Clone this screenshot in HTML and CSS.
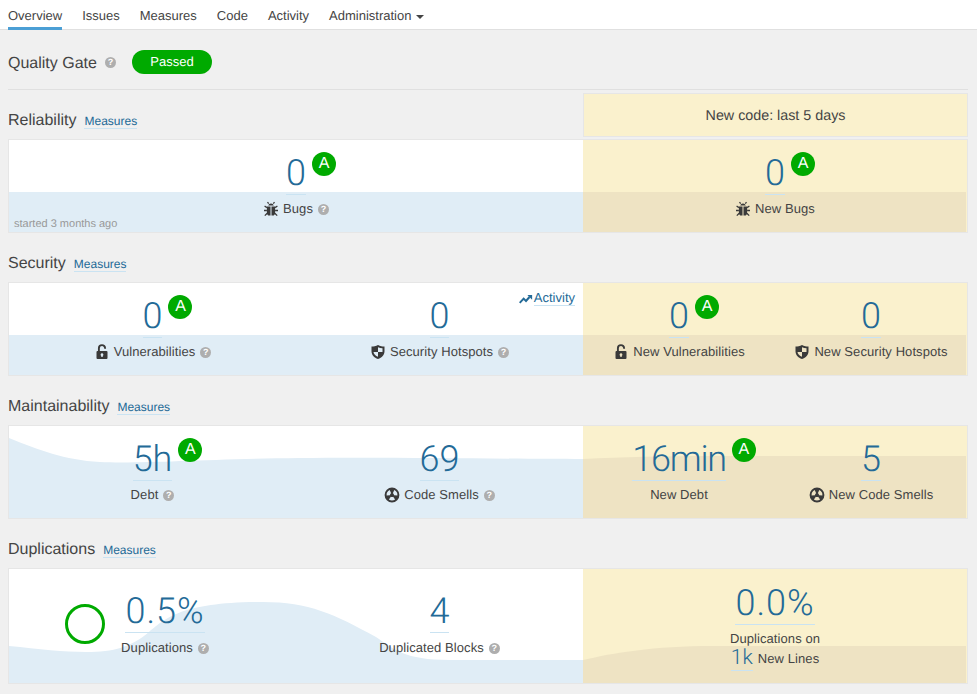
FILE: index.html
```html
<!DOCTYPE html>
<html lang="en">
<head>
<meta charset="utf-8">
<title>Overview</title>
<link rel="stylesheet" href="styles.css">
</head>
<body>
<svg class="defs" width="0" height="0" aria-hidden="true">
  <symbol id="i-bug" viewBox="0 0 16 16">
    <path d="M5.2 4.600a2.900 2.900 0 0 1 5.600 0z"/>
    <path d="M3.900 5.400h3.600v9.200H6.200c-1.400 0-2.300-1.100-2.300-2.600zM8.500 5.400h3.600V12c0 1.500-.9 2.600-2.300 2.600H8.500z"/>
    <path d="M5.700 2.600 4.500 1.200M10.300 2.600l1.200-1.400M3.900 6.600 1.600 5M12.100 6.600 14.400 5M3.900 9.500H1M12.100 9.500H15M4.200 12.200 1.800 14.600M11.800 12.200l2.400 2.400" fill="none" stroke="currentColor" stroke-width="1.300"/>
  </symbol>
  <symbol id="i-lock" viewBox="0 0 16 16">
    <path fill-rule="evenodd" d="M3.500 7h9a1 1 0 0 1 1 1v6a1 1 0 0 1-1 1h-9a1 1 0 0 1-1-1V8a1 1 0 0 1 1-1zM8 9.300a1.400 1.400 0 0 0-.7 2.600V13h1.400v-1.100A1.400 1.400 0 0 0 8 9.300z"/>
    <path d="M4.900 7.500V4.200a3.100 3.100 0 0 1 6.200 0v.6" fill="none" stroke="currentColor" stroke-width="1.900"/>
  </symbol>
  <symbol id="i-shield" viewBox="0 0 16 16">
    <path fill-rule="evenodd" d="M8 1c2.200 1.100 4.300 1.500 6.500 1.600v4.600c0 3.700-2.600 6.400-6.500 7.800-3.900-1.400-6.500-4.100-6.500-7.800V2.600C3.700 2.500 5.800 2.100 8 1zM8 3.300V8h4.500V4.300C11 4.200 9.400 3.900 8 3.300zM8 8H3.500c.2 2.100 2 3.800 4.500 4.800z"/>
  </symbol>
  <symbol id="i-smell" viewBox="0 0 16 16">
    <path fill-rule="evenodd" d="M8 .6a7.400 7.400 0 1 1 0 14.800A7.400 7.400 0 0 1 8 .6zM9.990 8.170 13.380 8.470A5.400 5.400 0 0 0 10.280 3.110L8.850 6.190A2 2 0 0 1 9.990 8.170zM6.010 8.170 2.620 8.470A5.400 5.400 0 0 1 5.720 3.110L7.150 6.190A2 2 0 0 0 6.010 8.170zM6.850 9.640 4.900 12.420A5.400 5.400 0 0 0 11.100 12.420L9.150 9.640A2 2 0 0 1 6.850 9.640z"/>
  </symbol>
  <symbol id="i-trend" viewBox="0 0 16 16">
    <path d="M.8 12.500 5.300 7.600l2.700 2.700 4-4.600" fill="none" stroke="currentColor" stroke-width="2.300"/>
    <path d="M9.600 3.400H15v5.400z"/>
  </symbol>
</svg>

<nav class="nav">
  <a class="nav-item is-active">Overview</a>
  <a class="nav-item">Issues</a>
  <a class="nav-item">Measures</a>
  <a class="nav-item">Code</a>
  <a class="nav-item">Activity</a>
  <a class="nav-item">Administration<i class="caret"></i></a>
</nav>

<main class="page">
  <div class="gate">
    <h2 class="title">Quality Gate</h2>
    <span class="help gate-help">?</span>
    <span class="pill">Passed</span>
  </div>

  <section>
    <div class="head">
      <h3 class="title">Reliability</h3>
      <a class="link">Measures</a>
      <div class="new-code">New code: last 5 days</div>
    </div>
    <div class="panel">
      <div class="pane pane-old">
        <svg class="graph" viewBox="0 0 574 92" preserveAspectRatio="none"><rect class="fill-old" y="52" width="574" height="40"/></svg>
        <div class="measure">
          <div class="value-wrap"><a class="value">0</a><span class="rating">A</span></div>
          <div class="label"><svg class="icon"><use href="#i-bug"/></svg>Bugs<span class="help">?</span></div>
        </div>
        <span class="started">started 3 months ago</span>
      </div>
      <div class="pane pane-new">
        <svg class="graph" viewBox="0 0 384 92" preserveAspectRatio="none"><rect class="fill-new" y="52" width="383" height="40"/></svg>
        <div class="measure">
          <div class="value-wrap"><a class="value">0</a><span class="rating">A</span></div>
          <div class="label"><svg class="icon"><use href="#i-bug"/></svg>New Bugs</div>
        </div>
      </div>
    </div>
  </section>

  <section>
    <div class="head">
      <h3 class="title">Security</h3>
      <a class="link">Measures</a>
    </div>
    <div class="panel">
      <div class="pane pane-old">
        <svg class="graph" viewBox="0 0 574 92" preserveAspectRatio="none"><rect class="fill-old" y="52" width="574" height="40"/></svg>
        <div class="measure">
          <div class="value-wrap"><a class="value">0</a><span class="rating">A</span></div>
          <div class="label"><svg class="icon"><use href="#i-lock"/></svg>Vulnerabilities<span class="help">?</span></div>
        </div>
        <div class="measure">
          <div class="value-wrap"><a class="value">0</a></div>
          <div class="label"><svg class="icon"><use href="#i-shield"/></svg>Security Hotspots<span class="help">?</span></div>
        </div>
        <a class="activity"><svg class="trend"><use href="#i-trend"/></svg><span class="link">Activity</span></a>
      </div>
      <div class="pane pane-new">
        <svg class="graph" viewBox="0 0 384 92" preserveAspectRatio="none"><rect class="fill-new" y="52" width="383" height="40"/></svg>
        <div class="measure">
          <div class="value-wrap"><a class="value">0</a><span class="rating">A</span></div>
          <div class="label"><svg class="icon"><use href="#i-lock"/></svg>New Vulnerabilities</div>
        </div>
        <div class="measure">
          <div class="value-wrap"><a class="value">0</a></div>
          <div class="label"><svg class="icon"><use href="#i-shield"/></svg>New Security Hotspots</div>
        </div>
      </div>
    </div>
  </section>

  <section>
    <div class="head">
      <h3 class="title">Maintainability</h3>
      <a class="link">Measures</a>
    </div>
    <div class="panel">
      <div class="pane pane-old">
        <svg class="graph" viewBox="0 0 574 92" preserveAspectRatio="none"><path class="fill-old" d="M0 12C30 24 55 34 91 36C130 38 200 33 290 32S500 33 574 33V92H0Z"/></svg>
        <div class="measure">
          <div class="value-wrap"><a class="value">5h</a><span class="rating">A</span></div>
          <div class="label">Debt<span class="help">?</span></div>
        </div>
        <div class="measure">
          <div class="value-wrap"><a class="value">69</a></div>
          <div class="label"><svg class="icon"><use href="#i-smell"/></svg>Code Smells<span class="help">?</span></div>
        </div>
      </div>
      <div class="pane pane-new">
        <svg class="graph" viewBox="0 0 384 92" preserveAspectRatio="none"><path class="fill-new" d="M0 33C40 31 80 30 130 30H383V92H0Z"/></svg>
        <div class="measure">
          <div class="value-wrap"><a class="value value-tight">16min</a><span class="rating">A</span></div>
          <div class="label">New Debt</div>
        </div>
        <div class="measure">
          <div class="value-wrap"><a class="value">5</a></div>
          <div class="label"><svg class="icon"><use href="#i-smell"/></svg>New Code Smells</div>
        </div>
      </div>
    </div>
  </section>

  <section>
    <div class="head">
      <h3 class="title">Duplications</h3>
      <a class="link">Measures</a>
    </div>
    <div class="panel panel-tall">
      <div class="pane pane-old">
        <svg class="graph" viewBox="0 0 574 114" preserveAspectRatio="none"><path class="fill-old" d="M0 77C30 80 55 83 77 83C105 83 122 78 140 63C158 48 175 33 254 33C300 33 325 45 367 68C385 80 395 91 441 91H574V114H0Z"/></svg>
        <div class="dup-cell">
          <svg class="donut" viewBox="0 0 40 40"><circle cx="20" cy="20" r="18.500"/></svg>
          <div class="measure">
            <div class="value-wrap"><a class="value value-wide">0.5%</a></div>
            <div class="label">Duplications<span class="help">?</span></div>
          </div>
        </div>
        <div class="measure">
          <div class="value-wrap"><a class="value">4</a></div>
          <div class="label">Duplicated Blocks<span class="help">?</span></div>
        </div>
      </div>
      <div class="pane pane-new">
        <svg class="graph" viewBox="0 0 384 114" preserveAspectRatio="none"><path class="fill-new" d="M0 91C30 84 70 77 130 77H383V114H0Z"/></svg>
        <div class="measure">
          <div class="value-wrap"><a class="value value-wide">0.0%</a></div>
          <div class="label label-stack">Duplications on</div>
          <div class="label label-lines"><a class="value-small">1k</a>New Lines</div>
        </div>
      </div>
    </div>
  </section>
</main>
</body>
</html>
```
FILE: styles.css
```css
* { box-sizing: border-box; }

html, body { margin: 0; }

body {
  background: #f0f0f0;
  color: #444;
  font: 13px/16px "Liberation Sans", Arial, sans-serif;
  text-rendering: geometricPrecision;
  overflow: hidden;
}

.defs { position: absolute; }

.nav {
  display: flex;
  gap: 20px;
  height: 30px;
  padding: 0 8px;
  background: #fff;
  border-bottom: 1px solid #e0e0e0;
}

.nav-item {
  display: flex;
  align-items: center;
  height: 30px;
  padding-top: 5px;
  color: #444;
  border-bottom: 3px solid transparent;
}

.nav-item.is-active { border-bottom-color: #4b9fd5; }

.caret {
  width: 0;
  height: 0;
  margin-left: 5px;
  margin-top: 1px;
  border: 4px solid transparent;
  border-top-color: #444;
  border-bottom-width: 0;
}

.page { padding: 0 9px 0 8px; }

.gate {
  display: flex;
  align-items: center;
  height: 60px;
  padding-top: 5px;
  border-bottom: 1px solid #e0e0e0;
}

.title {
  margin: 0;
  padding-top: 4px;
  font-size: 16px;
  line-height: 24px;
  font-weight: 400;
}

.gate-help { margin-left: 8px; width: 10px; height: 10px; line-height: 10px; }

.pill {
  width: 80px;
  height: 24px;
  margin-left: 16px;
  border-radius: 12px;
  background: #00aa00;
  color: #fff;
  text-align: center;
  line-height: 23px;
}

.help {
  display: inline-block;
  flex: none;
  width: 11px;
  height: 11px;
  border-radius: 50%;
  background: #aeaeae;
  color: #fff;
  font-size: 9px;
  font-weight: 700;
  line-height: 11px;
  text-align: center;
}

.label .help { margin-left: 5px; }

.head {
  display: flex;
  align-items: center;
  height: 49px;
  padding-top: 9px;
}

.link {
  margin-left: 8px;
  margin-top: 4px;
  color: #236a97;
  font-size: 12px;
  line-height: 14px;
  border-bottom: 1px solid #cae3f2;
}

.new-code {
  align-self: flex-start;
  width: 385px;
  height: 44px;
  margin: -6px 0 0 auto;
  background: #faf1cd;
  border: 1px solid #e6e6e6;
  font-size: 14.300px;
  line-height: 44px;
  text-align: center;
}

.panel {
  display: flex;
  height: 94px;
  background: #fff;
  border: 1px solid #e6e6e6;
}

.panel-tall { height: 116px; }

.pane {
  position: relative;
  display: flex;
}

.pane-old { width: 574px; }

.pane-new { flex: 1; background: #faf1cd; }

.graph {
  position: absolute;
  inset: 0;
  width: 100%;
  height: 100%;
}

.fill-old { fill: #e0edf6; }

.fill-new { fill: #eee3c3; }

.measure {
  position: relative;
  flex: 1 1 0;
  display: flex;
  flex-direction: column;
  align-items: center;
  padding-top: 15px;
}

.value-wrap { position: relative; }

.value {
  display: block;
  padding-bottom: 3px;
  color: #236a97;
  font: 300 36px/36px Roboto, "Liberation Sans", sans-serif;
  border-bottom: 1px solid #cae3f2;
}

.value-tight { letter-spacing: -1.200px; }

.value-wide { letter-spacing: 1px; }

.rating {
  position: absolute;
  top: -3px;
  left: calc(100% + 6px);
  width: 24px;
  height: 24px;
  border-radius: 50%;
  background: #00aa00;
  color: #fff;
  font-size: 16px;
  line-height: 23px;
  text-align: center;
}

.label {
  display: flex;
  align-items: center;
  margin-top: 6px;
  letter-spacing: .08px;
  white-space: nowrap;
}

.icon {
  flex: none;
  width: 16px;
  height: 16px;
  margin-right: 4px;
  fill: currentColor;
  color: #3a3a3a;
}

.started {
  position: absolute;
  left: 5px;
  bottom: 0;
  color: #999;
  font-size: 11px;
  line-height: 16px;
}

.activity {
  position: absolute;
  top: 8px;
  right: 8px;
  display: flex;
  align-items: center;
  color: #236a97;
}

.activity .link { margin: 0 0 0 1px; font-size: 13px; }

.trend {
  width: 14px;
  height: 14px;
  fill: currentColor;
}

.dup-cell {
  position: relative;
  flex: none;
  display: flex;
  justify-content: center;
  width: 287px;
  padding-right: 31px;
}

.dup-cell .measure { flex: none; }

.panel-tall .measure { padding-top: 16px; }

.panel-tall .pane-old .measure { padding-top: 24px; }

.panel-tall .pane-old .label { margin-top: 7px; }

.donut {
  flex: none;
  width: 40px;
  height: 40px;
  margin: 35px 16px 0 0;
  fill: none;
  stroke: #00aa00;
  stroke-width: 3;
}

.label-stack { margin-top: 6px; }

.label-lines { margin-top: -1px; }

.value-small {
  margin-right: 5px;
  color: #236a97;
  font: 300 21px/24px Roboto, "Liberation Sans", sans-serif;
  border-bottom: 1px solid #cae3f2;
}
```
